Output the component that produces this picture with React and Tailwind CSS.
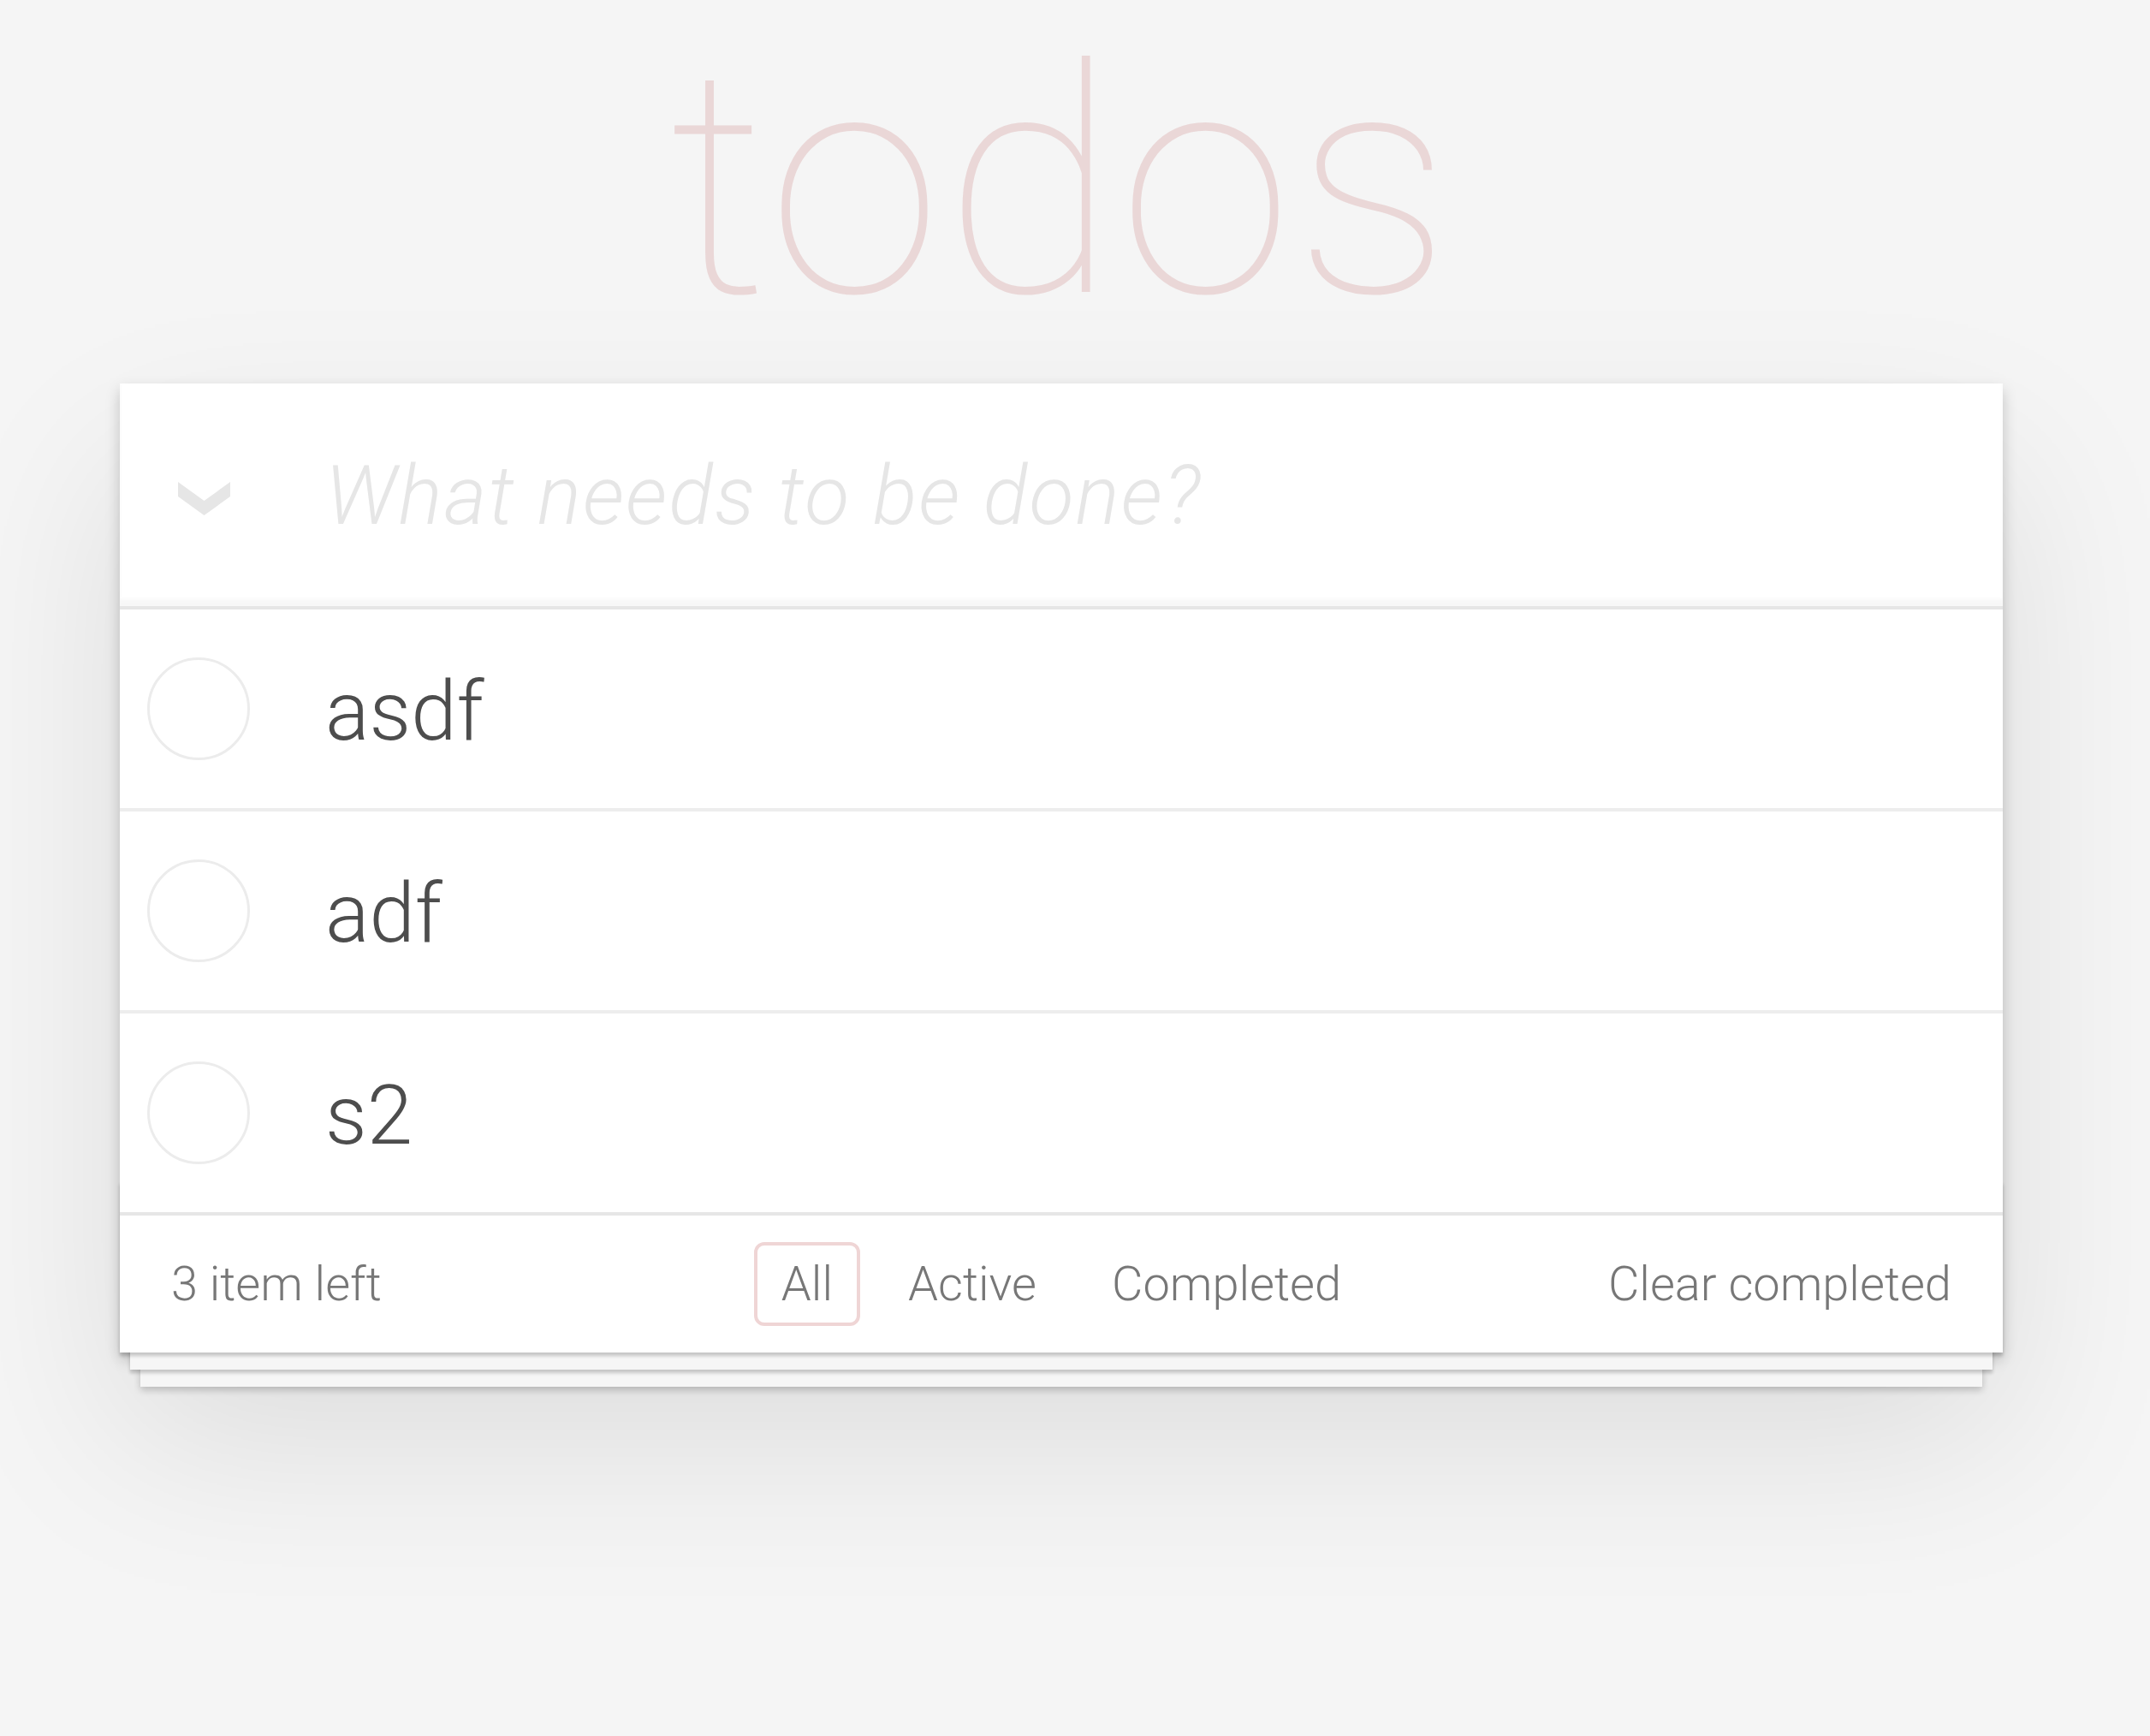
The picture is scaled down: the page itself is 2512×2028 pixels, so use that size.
import React from 'react';

const FONT = "font-['Roboto','Helvetica_Neue','Liberation_Sans',sans-serif]";

const TODOS = [
  { id: 1, title: 'asdf' },
  { id: 2, title: 'adf' },
  { id: 3, title: 's2' },
];

const FILTERS = ['All', 'Active', 'Completed'];

function Chevron() {
  return (
    <svg width="61" height="39" viewBox="0 0 61 39" className="block">
      <polygon points="0,0 30.5,22 61,0 61,17 30.5,39 0,17" fill="#e6e6e6" />
    </svg>
  );
}

function TodoItem({ todo, last }) {
  return (
    <li className={`relative flex items-center bg-white ${last ? 'h-[232px]' : 'h-[236px] border-b-4 border-[#ededed]'}`}>
      <div className="w-[240px] shrink-0 flex items-center">
        <div className="ml-[32px] w-[120px] h-[120px] rounded-full border-[3px] border-[#ececec]" />
      </div>
      <label className="pt-[6px] text-[96px] leading-[115px] font-light text-[#4d4d4d]">{todo.title}</label>
    </li>
  );
}

export default function App() {
  const active = 'All';

  return (
    <div className={`min-h-[2028px] bg-[#f5f5f5] ${FONT}`}>
      <div className="pl-[140px] w-[2340px]">
        <h1 className="h-[448px] text-center text-[368px] leading-[431px] tracking-[3px] font-thin text-[rgba(175,47,47,0.15)]">
          todos
        </h1>

        <section className="relative w-[2200px] bg-white shadow-[0_8px_16px_0_rgba(0,0,0,0.2),0_100px_200px_0_rgba(0,0,0,0.1)]">
          {/* new todo input */}
          <header className="flex items-center h-[260px] shadow-[inset_0_-8px_4px_rgba(0,0,0,0.03)]">
            <div className="w-[240px] shrink-0 pl-[68px] pt-[9px]">
              <Chevron />
            </div>
            <div className="pt-[2px] text-[96px] leading-[134px] italic font-light tracking-[2px] text-[#e6e6e6]">
              What needs to be done?
            </div>
          </header>

          <ul className="border-t-4 border-[#e6e6e6]">
            {TODOS.map((t, i) => (
              <TodoItem key={t.id} todo={t} last={i === TODOS.length - 1} />
            ))}
          </ul>

          <footer className="relative grid grid-cols-[1fr_auto_1fr] items-center h-[164px] px-[60px] border-t-4 border-[#e6e6e6] text-[56px] leading-[80px] text-[#777777] font-light">
            <div className="absolute left-0 right-0 bottom-0 h-[200px] pointer-events-none shadow-[0_4px_4px_rgba(0,0,0,0.2),0_32px_0_-12px_#f6f6f6,0_36px_4px_-12px_rgba(0,0,0,0.2),0_64px_0_-24px_#f6f6f6,0_68px_8px_-24px_rgba(0,0,0,0.2)]" />
            <span className="justify-self-start">3 item left</span>
            <ul className="flex items-center">
              {FILTERS.map((f) => (
                <li key={f}>
                  <a
                    className={`block mx-[12px] px-[28px] py-[12px] leading-[66px] border-4 rounded-[12px] ${
                      f === active ? 'border-[rgba(175,47,47,0.2)]' : 'border-transparent'
                    }`}
                  >
                    {f}
                  </a>
                </li>
              ))}
            </ul>
            <span className="justify-self-end">Clear completed</span>
          </footer>
        </section>
      </div>
    </div>
  );
}
